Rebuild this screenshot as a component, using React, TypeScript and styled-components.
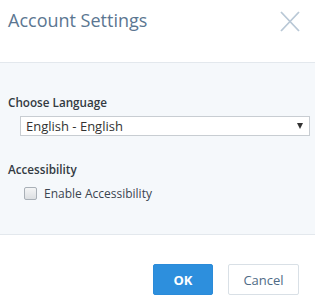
import React from "react";
import styled, { createGlobalStyle } from "styled-components";

const Global = createGlobalStyle`
  html, body { margin: 0; padding: 0; background: #ffffff; }
  body { font-family: "Open Sans", "Liberation Sans", sans-serif; }
  * { box-sizing: border-box; }
`;

const Dialog = styled.div`
  width: 315px;
  height: 305px;
  display: flex;
  flex-direction: column;
  background: #ffffff;
`;

const Header = styled.div`
  height: 63px;
  display: flex;
  align-items: flex-start;
  justify-content: space-between;
  padding: 7px 15px 0 8px;
  border-bottom: 1px solid #e3e8ed;
`;

const Title = styled.h1`
  margin: 0;
  font-size: 18px;
  font-weight: 400;
  color: #5b7691;
  line-height: 26px;
`;

const CloseButton = styled.button`
  border: none;
  background: none;
  padding: 0;
  margin-top: 4px;
  width: 20px;
  height: 21px;
  cursor: pointer;
`;

const Body = styled.div`
  height: 172px;
  background: #f5f8fb;
  border-bottom: 1px solid #e3e8ed;
  padding: 31px 5px 0 8px;
  display: flex;
  flex-direction: column;
`;

const SectionLabel = styled.div`
  font-size: 11.7px;
  font-weight: 600;
  color: #333a42;
  line-height: 16px;
`;

const SelectBox = styled.div`
  margin: 6px 0 0 12px;
  height: 20px;
  border: 1px solid #c8cdd2;
  background: #ffffff;
  display: flex;
  align-items: center;
  justify-content: space-between;
  padding: 0 6px 0 5px;
  font-size: 13px;
  color: #333333;
`;

const Caret = styled.span`
  width: 0;
  height: 0;
  border-left: 3px solid transparent;
  border-right: 3px solid transparent;
  border-top: 6px solid #333;
`;

const Section = styled.div<{ $gap: number }>`
  margin-top: ${(p) => p.$gap}px;
`;

const CheckRow = styled.label`
  display: flex;
  align-items: center;
  margin: 8px 0 0 16px;
  font-size: 12px;
  color: #3b4550;
  gap: 7px;
`;

const Box = styled.span`
  width: 13px;
  height: 13px;
  border: 1px solid #a9b0b7;
  border-radius: 2px;
  background: linear-gradient(#f4f5f6, #dcdfe2);
`;

const Footer = styled.div`
  flex: 1;
  display: flex;
  justify-content: flex-end;
  align-items: flex-start;
  padding: 29px 16px 0 0;
  gap: 15px;
`;

const Button = styled.button<{ $primary?: boolean }>`
  height: 31px;
  width: ${(p) => (p.$primary ? 60 : 71)}px;
  border-radius: 2px;
  font-family: "Open Sans", "Liberation Sans", sans-serif;
  font-size: 13px;
  font-weight: ${(p) => (p.$primary ? 700 : 400)};
  border: 1px solid ${(p) => (p.$primary ? "#2b8bd9" : "#d9e0e6")};
  background: ${(p) => (p.$primary ? "#2d8fdd" : "#ffffff")};
  color: ${(p) => (p.$primary ? "#ffffff" : "#4f6b86")};
  cursor: pointer;
`;

export default function App() {
  return (
    <>
      <Global />
      <Dialog>
        <Header>
          <Title>Account Settings</Title>
          <CloseButton aria-label="Close">
            <svg width="20" height="21" viewBox="0 0 20 21">
              <path d="M1 1 L19 20 M19 1 L1 20" stroke="#b9c8d6" strokeWidth="1.8" />
            </svg>
          </CloseButton>
        </Header>
        <Body>
          <Section $gap={0}>
            <SectionLabel>Choose Language</SectionLabel>
            <SelectBox>
              <span>English - English</span>
              <Caret />
            </SelectBox>
          </Section>
          <Section $gap={25}>
            <SectionLabel>Accessibility</SectionLabel>
            <CheckRow>
              <Box />
              Enable Accessibility
            </CheckRow>
          </Section>
        </Body>
        <Footer>
          <Button $primary>OK</Button>
          <Button>Cancel</Button>
        </Footer>
      </Dialog>
    </>
  );
}
